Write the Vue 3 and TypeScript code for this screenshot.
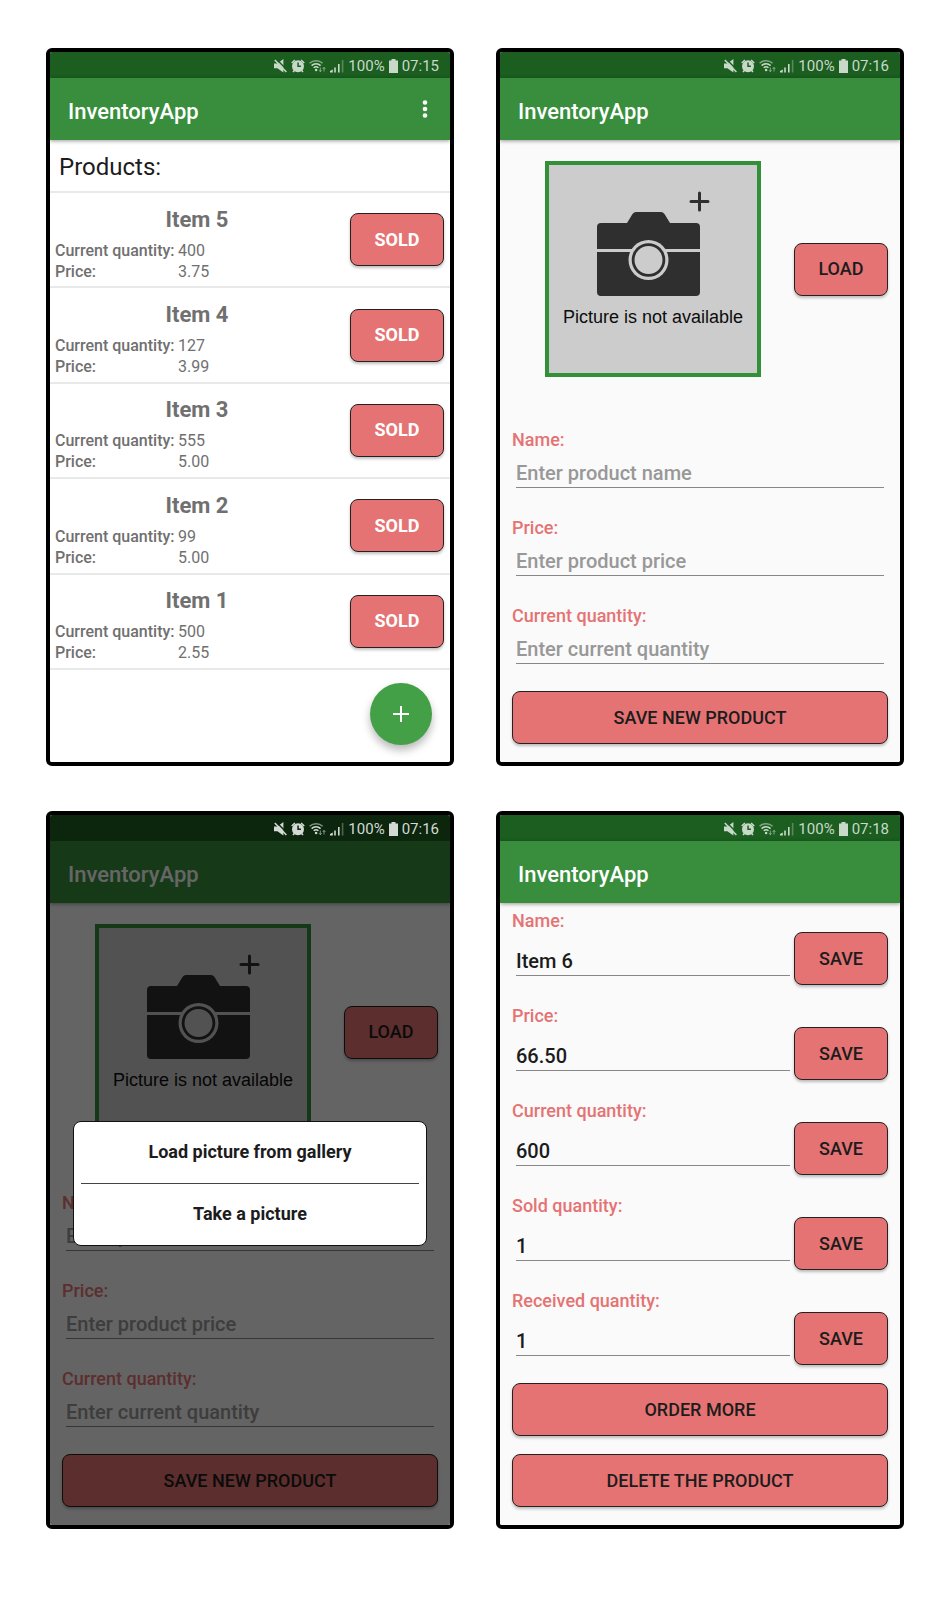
<script setup lang="ts">
import { reactive } from 'vue'

type Kind = 'list' | 'add' | 'edit'

interface Screen {
  id: string
  kind: Kind
  time: string
  dialog: boolean
}

interface Product {
  name: string
  quantity: number
  price: string
}

interface Field {
  key: string
  label: string
  placeholder: string
}

const screens: Screen[] = [
  { id: 'list', kind: 'list', time: '07:15', dialog: false },
  { id: 'add', kind: 'add', time: '07:16', dialog: false },
  { id: 'picker', kind: 'add', time: '07:16', dialog: true },
  { id: 'edit', kind: 'edit', time: '07:18', dialog: false },
]

const products = reactive<Product[]>([
  { name: 'Item 5', quantity: 400, price: '3.75' },
  { name: 'Item 4', quantity: 127, price: '3.99' },
  { name: 'Item 3', quantity: 555, price: '5.00' },
  { name: 'Item 2', quantity: 99, price: '5.00' },
  { name: 'Item 1', quantity: 500, price: '2.55' },
])

const newFields: Field[] = [
  { key: 'name', label: 'Name:', placeholder: 'Enter product name' },
  { key: 'price', label: 'Price:', placeholder: 'Enter product price' },
  { key: 'quantity', label: 'Current quantity:', placeholder: 'Enter current quantity' },
]

const editFields = reactive([
  { key: 'name', label: 'Name:', value: 'Item 6' },
  { key: 'price', label: 'Price:', value: '66.50' },
  { key: 'quantity', label: 'Current quantity:', value: '600' },
  { key: 'sold', label: 'Sold quantity:', value: '1' },
  { key: 'received', label: 'Received quantity:', value: '1' },
])

function sell(product: Product): void {
  if (product.quantity > 0) product.quantity -= 1
}
</script>

<template>
  <main class="gallery">
    <section v-for="screen in screens" :key="screen.id" class="phone">
      <div class="status" :class="{ dimmed: screen.dialog }">
        <svg class="icon-mute" viewBox="0 0 13 14" aria-hidden="true">
          <path d="M0 4.4h3.400L9.400 0v13.600L3.400 9.200H0z" />
          <path class="cut" d="M2 -.2 13.800 11.800" />
          <path class="line" d="M.8 1 12.400 13" />
        </svg>
        <svg class="icon-alarm" viewBox="0 0 14 14" aria-hidden="true">
          <path fill-rule="evenodd" d="M7 1.2a6 6 0 1 1 0 12 6 6 0 0 1 0-12zM6.3 3.6v4.3h3.6V6.6H7.8v-3z" />
          <path d="M.2 3.4 3.4.5l1 1L1.200 4.500zM13.800 3.400 10.600.5l-1 1 3.200 3zM1.400 12.400l1.800-1.800 1.200 1-1.800 1.800zM12.600 12.400l-1.800-1.800-1.200 1 1.800 1.800z" />
        </svg>
        <svg class="icon-wifi" viewBox="0 0 17 14" aria-hidden="true">
          <path class="line faint" d="M.6 4.200a9.600 9.600 0 0 1 13 0" />
          <path class="line" d="M2.600 6.600a6.600 6.600 0 0 1 9 0M4.700 8.800a3.600 3.600 0 0 1 4.800 0" />
          <circle cx="7.100" cy="11" r="1.300" />
          <path class="line thin faint" d="M11.300 8.500v4M10 11.200l1.300 1.500 1.300-1.500M15 12.500V8.500M13.700 9.900 15 8.400l1.300 1.500" />
        </svg>
        <svg class="icon-signal" viewBox="0 0 14 14" aria-hidden="true">
          <path d="M0 13.500v-1.500l2.800-1.500v3zM4.200 8.500h1.600v5H4.200zM8 5h1.600v8.500H8z" />
          <path class="ghost" d="M11.800 1h1.600v12.500h-1.600z" />
        </svg>
        <span class="percent">100%</span>
        <svg class="icon-battery" viewBox="0 0 9 14" aria-hidden="true">
          <path d="M2.500 0h4v1.500H9V14H0V1.500h2.500z" />
        </svg>
        <span>{{ screen.time }}</span>
      </div>

      <header class="appbar">
        <h1>InventoryApp</h1>
        <button v-if="screen.kind === 'list'" class="more" type="button" aria-label="More options">
          <svg viewBox="0 0 6 18" aria-hidden="true">
            <circle cx="3" cy="2.500" r="2.300" />
            <circle cx="3" cy="9" r="2.300" />
            <circle cx="3" cy="15.500" r="2.300" />
          </svg>
        </button>
      </header>

      <div v-if="screen.kind === 'list'" class="body white">
        <h2 class="heading">Products:</h2>
        <ul class="products">
          <li v-for="product in products" :key="product.name" class="product">
            <div class="info">
              <h3>{{ product.name }}</h3>
              <dl>
                <dt>Current quantity:</dt>
                <dd>{{ product.quantity }}</dd>
                <dt>Price:</dt>
                <dd>{{ product.price }}</dd>
              </dl>
            </div>
            <button class="btn sold" type="button" @click="sell(product)">SOLD</button>
          </li>
        </ul>
        <div class="fab-row">
          <button class="fab" type="button" aria-label="Add product">
            <svg viewBox="0 0 16 16" aria-hidden="true"><path d="M8 0v16M0 8h16" /></svg>
          </button>
        </div>
      </div>

      <form v-else-if="screen.kind === 'add'" class="body add" @submit.prevent>
        <div class="picture-row">
          <div class="picture-slot">
            <figure class="picture">
              <svg viewBox="0 0 208 142" aria-hidden="true">
                <path
                  class="camera"
                  d="M52 58H78L83.500 49Q85 47 87 47H112Q114 47 115.500 49L121 58H147Q151 58 151 62V127Q151 131 147 131H52Q48 131 48 127V62Q48 58 52 58Z"
                />
                <path class="strip" d="M48 85.500H151" />
                <circle class="rim" cx="99.500" cy="95" r="20" />
                <circle class="lens" cx="99.500" cy="95" r="15.400" />
                <path class="plus" d="M150.500 28v17M142 36.500h17" />
              </svg>
              <figcaption>Picture is not available</figcaption>
            </figure>
          </div>
          <button class="btn" type="button">LOAD</button>
        </div>
        <div class="fields">
          <div v-for="field in newFields" :key="field.key" class="field">
            <label :for="`${screen.id}-${field.key}`">{{ field.label }}</label>
            <input :id="`${screen.id}-${field.key}`" type="text" :placeholder="field.placeholder" />
          </div>
        </div>
        <button class="btn" type="submit">SAVE NEW PRODUCT</button>
      </form>

      <form v-else class="body edit" @submit.prevent>
        <div class="edit-fields">
          <div v-for="field in editFields" :key="field.key" class="edit-field">
            <label :for="`${screen.id}-${field.key}`">{{ field.label }}</label>
            <div class="edit-line">
              <input :id="`${screen.id}-${field.key}`" v-model="field.value" type="text" />
              <button class="btn" type="button">SAVE</button>
            </div>
          </div>
        </div>
        <button class="btn" type="button">ORDER MORE</button>
        <button class="btn" type="button">DELETE THE PRODUCT</button>
      </form>

      <div v-if="screen.dialog" class="backdrop">
        <div class="dialog" role="dialog" aria-label="Picture source">
          <button type="button">Load picture from gallery</button>
          <hr />
          <button type="button">Take a picture</button>
        </div>
      </div>
    </section>
  </main>
</template>

<style>
body {
  margin: 0;
  background: #fff;
}
</style>

<style scoped>
.gallery {
  box-sizing: border-box;
  min-height: 100vh;
  padding: 48px 46px;
  display: grid;
  grid-template-columns: repeat(2, minmax(0, 1fr));
  align-content: start;
  gap: 45px 42px;
  font-family: Roboto, "Liberation Sans", sans-serif;
  color: #1c1c1c;
}

h1,
h2,
h3,
ul,
dl,
dd,
figure {
  margin: 0;
  padding: 0;
}

button,
input {
  font-family: inherit;
  color: inherit;
  box-sizing: border-box;
}

svg {
  display: block;
}

.phone {
  box-sizing: border-box;
  position: relative;
  display: flex;
  flex-direction: column;
  aspect-ratio: 408 / 718;
  border: 4px solid #000;
  border-radius: 6px;
  overflow: hidden;
}

.status {
  --bar: #1b5e20;
  box-sizing: border-box;
  height: 26px;
  padding: 1px 11px 0 0;
  display: flex;
  align-items: center;
  justify-content: flex-end;
  gap: 4px;
  background: var(--bar);
  color: #c8d9c9;
  font-size: 15px;
  line-height: 18px;
}

.status.dimmed {
  --bar: #0b260d;
  position: relative;
  z-index: 2;
  color: #d3d9d3;
}

.status svg {
  height: 14px;
  fill: currentColor;
}

.status .line {
  fill: none;
  stroke: currentColor;
  stroke-width: 1.5;
}

.status .cut {
  fill: none;
  stroke: var(--bar);
  stroke-width: 1.5;
}

.status .thin {
  stroke-width: 1;
}

.status .faint {
  opacity: 0.6;
}

.status .ghost {
  opacity: 0.35;
}

.icon-mute {
  width: 13px;
}

.icon-alarm,
.icon-signal {
  width: 14px;
}

.icon-wifi {
  width: 17px;
}

.icon-battery {
  width: 9px;
}

.appbar {
  box-sizing: border-box;
  position: relative;
  height: 62px;
  padding: 0 16px 0 18px;
  display: flex;
  align-items: center;
  justify-content: space-between;
  background: #388e3c;
  color: #fff;
  box-shadow: 0 1px 4px rgba(0, 0, 0, 0.4);
}

.appbar h1 {
  padding-top: 5px;
  font-size: 22px;
  line-height: 26px;
  font-weight: 500;
}

.more {
  padding: 4px 6px;
  border: 0;
  background: none;
}

.more svg {
  width: 6px;
  height: 18px;
  fill: #fff;
}

.body {
  flex: 1;
  display: flex;
  flex-direction: column;
  background: #fafafa;
}

.white {
  background: #fff;
}

.heading {
  box-sizing: border-box;
  height: 53px;
  padding: 13px 9px 0;
  border-bottom: 2px solid #e9e9e9;
  font-size: 24px;
  line-height: 28px;
  font-weight: 400;
}

.products {
  flex: 1;
  display: grid;
  grid-auto-rows: 1fr;
  list-style: none;
}

.product {
  display: flex;
  align-items: center;
  gap: 6px;
  padding-right: 6px;
  border-bottom: 2px solid #e9e9e9;
}

.info {
  flex: 1;
  padding-top: 9px;
  color: #707070;
}

.info h3 {
  font-size: 22px;
  line-height: 26px;
  font-weight: 700;
  text-align: center;
}

.info dl {
  margin-top: 7px;
  padding-left: 5px;
  display: grid;
  grid-template-columns: 123px 1fr;
  font-size: 16px;
  line-height: 21px;
}

.info dt {
  font-weight: 500;
}

.fab-row {
  box-sizing: border-box;
  height: 92px;
  display: flex;
  justify-content: flex-end;
  align-items: center;
  padding: 0 18px 4px 0;
}

.fab {
  width: 62px;
  height: 62px;
  padding: 0;
  display: grid;
  place-items: center;
  border: 0;
  border-radius: 50%;
  background: #43a047;
  box-shadow: 0 5px 9px rgba(0, 0, 0, 0.28);
}

.fab svg {
  width: 16px;
  height: 16px;
  stroke: #fff;
  stroke-width: 2;
}

.btn {
  flex: none;
  min-width: 94px;
  height: 53px;
  padding: 0 12px;
  border: 1px solid #222;
  border-radius: 8px;
  background: #e57373;
  box-shadow: 0 2px 3px rgba(0, 0, 0, 0.25);
  font-size: 18px;
  line-height: 20px;
  font-weight: 500;
}

.sold {
  color: #fff;
  font-weight: 700;
}

label {
  font-size: 18px;
  line-height: 20px;
  font-weight: 500;
  color: #e57373;
}

input {
  min-width: 0;
  height: 27px;
  padding: 0 0 2px;
  border: 0;
  border-bottom: 1px solid #888;
  border-radius: 0;
  background: none;
  outline: none;
  font-size: 20px;
  line-height: 24px;
  font-weight: 500;
}

input::placeholder {
  color: #989898;
  opacity: 1;
}

.add {
  padding: 21px 12px 18px;
}

.picture-row {
  display: flex;
  align-items: center;
}

.picture-slot {
  flex: 1;
  display: flex;
  justify-content: center;
}

.picture {
  box-sizing: border-box;
  width: 216px;
  height: 216px;
  border: 4px solid #338f38;
  background: #ccc;
  color: #0c0c0c;
  font-family: "Liberation Sans", Arial, sans-serif;
  font-size: 18px;
  line-height: 20px;
  text-align: center;
}

.camera {
  fill: #2f2f2f;
}

.strip {
  stroke: #ccc;
  stroke-width: 3;
}

.rim {
  fill: #ccc;
}

.lens {
  fill: #ccc;
  stroke: #2f2f2f;
  stroke-width: 2.8;
}

.plus {
  stroke: #2f2f2f;
  stroke-width: 3;
  stroke-linecap: round;
}

.fields {
  margin: auto 0 27px;
  display: grid;
  gap: 30px;
}

.field {
  display: grid;
  gap: 11px;
}

.field input {
  margin: 0 4px;
}

.edit {
  padding: 8px 12px 18px;
  justify-content: space-between;
}

.edit-fields {
  display: grid;
  gap: 21px;
}

.edit-field {
  display: grid;
  gap: 1px;
}

.edit-line {
  display: flex;
  align-items: flex-end;
  gap: 4px;
}

.edit-line input {
  flex: 1;
  margin: 0 0 9px 4px;
}

.backdrop {
  position: absolute;
  inset: 26px 0 0;
  z-index: 1;
  display: flex;
  align-items: center;
  justify-content: center;
  padding: 0 23px;
  background: rgba(0, 0, 0, 0.6);
}

.dialog {
  flex: 1;
  border: 1px solid #111;
  border-radius: 8px;
  background: #fff;
}

.dialog button {
  display: block;
  width: 100%;
  height: 61px;
  border: 0;
  background: none;
  font-size: 18px;
  line-height: 20px;
  font-weight: 700;
}

.dialog hr {
  height: 1px;
  margin: 0 7px;
  border: 0;
  background: #444;
}
</style>
